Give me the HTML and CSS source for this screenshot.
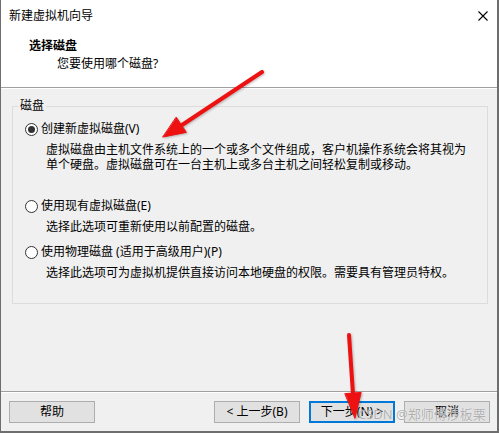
FILE: index.html
```html
<!DOCTYPE html>
<html lang="zh-CN">
<head>
    <meta charset="UTF-8">
    <title>新建虚拟机向导</title>
    <link rel="stylesheet" href="styles.css">
</head>
<body>
    <div class="window">
        <div class="header">
            <div class="title-row">
                <span class="title">新建虚拟机向导</span>
                <svg class="close" width="10" height="10" viewBox="0 0 10 10">
                    <path d="M0.5 0.5 L9.5 9.5 M9.5 0.5 L0.5 9.5" stroke="#000" stroke-width="1.1" fill="none"/>
                </svg>
            </div>
            <div class="heading">选择磁盘</div>
            <div class="subheading">您要使用哪个磁盘?</div>
        </div>

        <div class="main">
            <fieldset class="group">
                <legend>磁盘</legend>

                <div class="option option-first">
                    <label class="radio-row">
                        <span class="radio checked"></span>
                        <span>创建新虚拟磁盘(V)</span>
                    </label>
                    <p class="desc">虚拟磁盘由主机文件系统上的一个或多个文件组成，客户机操作系统会将其视为</p>
                    <p class="desc desc-next">单个硬盘。虚拟磁盘可在一台主机上或多台主机之间轻松复制或移动。</p>
                </div>

                <div class="option option-second">
                    <label class="radio-row">
                        <span class="radio"></span>
                        <span>使用现有虚拟磁盘(E)</span>
                    </label>
                    <p class="desc">选择此选项可重新使用以前配置的磁盘。</p>
                </div>

                <div class="option option-third">
                    <label class="radio-row">
                        <span class="radio"></span>
                        <span>使用物理磁盘 (适用于高级用户)(P)</span>
                    </label>
                    <p class="desc">选择此选项可为虚拟机提供直接访问本地硬盘的权限。需要具有管理员特权。</p>
                </div>
            </fieldset>
        </div>

        <div class="footer">
            <button class="btn">帮助</button>
            <div class="spacer"></div>
            <button class="btn">&lt; 上一步(B)</button>
            <button class="btn btn-default">下一步(N) &gt;</button>
            <button class="btn">取消</button>
        </div>

        <!-- 截图上的标注箭头 -->
        <svg class="annotations" width="499" height="433" viewBox="0 0 499 433">
            <g fill="#ee1111" stroke="#ee1111" stroke-linecap="round" stroke-linejoin="round">
                <line x1="262" y1="72" x2="182" y2="125" stroke-width="4"/>
                <polygon points="163,137 186.4,132.4 176.4,117.4" stroke-width="1"/>
                <line x1="349" y1="335" x2="353" y2="394" stroke-width="4"/>
                <polygon points="355,418 361.2,392.4 345.2,393.6" stroke-width="1"/>
            </g>
        </svg>

        <div class="watermark">CSDN @郑师傅涉板栗</div>
    </div>
</body>
</html>
```

FILE: styles.css
```css
* {
    margin: 0;
    padding: 0;
    box-sizing: border-box;
}

body {
    font-family: "Noto Sans", "Noto Sans CJK SC", sans-serif;
    font-size: 12px;
    color: #000;
    background: #fff;
}

.window {
    position: relative;
    width: 499px;
    height: 433px;
    background: #f0f0f0;
    border-left: 1px solid #6e6e6e;
    border-right: 2px solid #6e6e6e;
    border-bottom: 2px solid #6e6e6e;
    display: flex;
    flex-direction: column;
}

.header {
    background: #fff;
    height: 88px;
    border-bottom: 1px solid #a0a0a0;
    flex-shrink: 0;
}

.title-row {
    display: flex;
    align-items: center;
    justify-content: space-between;
    padding: 8px 9px 0 8px;
    height: 24px;
}

.title {
    line-height: 16px;
}

.close {
    margin-top: -1px;
}

.heading {
    font-weight: 700;
    line-height: 16px;
    margin-top: 14px;
    padding-left: 28px;
}

.subheading {
    line-height: 16px;
    margin-top: 2px;
    padding-left: 56px;
}

.main {
    flex: 1;
    border-top: 1px solid #fff;
    padding: 9px 9px 0 11px;
}

.group {
    border: 1px solid #dcdcdc;
    padding: 0 0 23px 0;
    width: 476px;
}

.group legend {
    margin-left: 5px;
    padding: 0 2px;
    line-height: 16px;
}

.option {
    margin-left: 12px;
}

.radio-row {
    display: flex;
    align-items: center;
    gap: 3px;
    line-height: 16px;
}

.radio {
    width: 13px;
    height: 13px;
    border: 1px solid #333;
    border-radius: 50%;
    background: #fff;
    display: flex;
    align-items: center;
    justify-content: center;
}

.radio.checked::after {
    content: "";
    width: 7px;
    height: 7px;
    border-radius: 50%;
    background: #333;
}

.desc {
    line-height: 15px;
    margin-top: 5px;
    padding-left: 21px;
}

.desc-next {
    margin-top: 0;
}

.option-first {
    margin-top: 7px;
}

.option-second {
    margin-top: 26px;
}

.option-third {
    margin-top: 10px;
}

.footer {
    display: flex;
    align-items: flex-start;
    gap: 9px;
    height: 40px;
    border-top: 1px solid #a0a0a0;
    box-shadow: inset 0 1px 0 #fff;
    padding: 9px 7px 0 8px;
    flex-shrink: 0;
}

.spacer {
    flex: 1;
}

.btn {
    width: 86px;
    height: 22px;
    background: #e1e1e1;
    border: 1px solid #adadad;
    font-family: inherit;
    font-size: 12px;
    color: #000;
    line-height: 18px;
}

.btn-default {
    border: 2px solid #0078d7;
}

.annotations {
    position: absolute;
    left: -1px;
    top: 0;
    pointer-events: none;
    filter: drop-shadow(1px 1px 1px rgba(0, 0, 0, 0.25));
}

.watermark {
    position: absolute;
    left: 357px;
    top: 405px;
    font-size: 13px;
    line-height: 18px;
    color: rgba(150, 150, 150, 0.75);
    text-shadow: 0 0 1px #fff;
    pointer-events: none;
}
```
